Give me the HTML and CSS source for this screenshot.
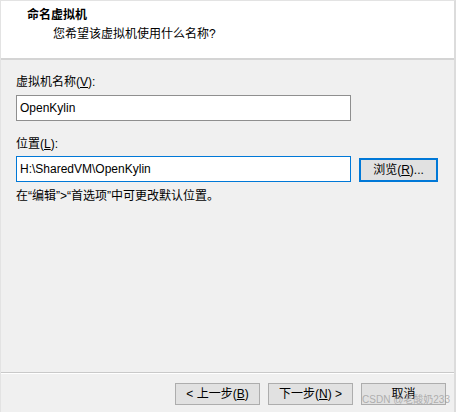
FILE: index.html
```html
<!DOCTYPE html>
<html lang="zh-CN">
<head>
<meta charset="utf-8">
<title>命名虚拟机</title>
<link rel="stylesheet" href="styles.css">
</head>
<body>
<div class="wizard">
  <header class="wizard-head">
    <h1 class="wizard-title">命名虚拟机</h1>
    <p class="wizard-sub">您希望该虚拟机使用什么名称?</p>
  </header>

  <main class="wizard-body">
    <label class="field-label">虚拟机名称(<u>V</u>):</label>
    <div class="textbox">OpenKylin</div>

    <label class="field-label second">位置(<u>L</u>):</label>
    <div class="path-row">
      <div class="textbox focused">H:\SharedVM\OpenKylin</div>
      <button class="btn btn-default">浏览(<u>R</u>)...</button>
    </div>
    <p class="hint">在“编辑”&gt;“首选项”中可更改默认位置。</p>
  </main>

  <footer class="wizard-foot">
    <button class="btn nav">&lt; 上一步(<u>B</u>)</button>
    <button class="btn nav">下一步(<u>N</u>) &gt;</button>
    <button class="btn nav">取消</button>
    <span class="watermark">CSDN @老酸奶233</span>
  </footer>
</div>
</body>
</html>
```
FILE: styles.css
```css
* { box-sizing: border-box; }

html, body {
  margin: 0;
  padding: 0;
  background: #f0f0f0;
}

body {
  width: 456px;
  height: 412px;
  font-family: "Liberation Sans", "Noto Sans CJK SC", sans-serif;
  font-size: 12px;
  line-height: 16px;
  color: #000;
}

.wizard {
  width: 456px;
  height: 412px;
  display: flex;
  flex-direction: column;
  border-top: 1px solid #e3e3e3;
  border-left: 1px solid #e3e3e3;
  border-right: 2px solid #dcdcdc;
  background: #f0f0f0;
}

/* white banner with the step title */
.wizard-head {
  background: #fff;
  height: 59px;
  padding: 6px 0 0 26px;
  border-bottom: 2px solid #d4d4d4;
}

.wizard-title {
  margin: 0;
  font-size: 12px;
  line-height: 16px;
  font-weight: bold;
}

.wizard-sub {
  margin: 3px 0 0 26px;
}

.wizard-body {
  flex: 1;
  padding: 14px 0 0 15px;
  display: flex;
  flex-direction: column;
  align-items: flex-start;
}

.field-label {
  display: block;
  margin-bottom: 5px;
}

.field-label.second {
  margin-top: 15px;
  margin-bottom: 4px;
}

.textbox {
  width: 335px;
  height: 26px;
  background: #fff;
  border: 1px solid #8f8f8f;
  padding: 4px 0 0 3px;
  line-height: 16px;
  white-space: nowrap;
}

.textbox.focused {
  border-color: #0078d7;
}

.path-row {
  display: flex;
  align-items: flex-end;
  gap: 8px;
}

.btn {
  font: inherit;
  color: #000;
  background: #e1e1e1;
  border: 1px solid #adadad;
  padding: 0;
  margin: 0;
  line-height: 16px;
}

.btn-default {
  width: 79px;
  height: 24px;
  border: 2px solid #0078d7;
}

.hint {
  margin: 6px 0 0;
}

/* separator plus the navigation buttons */
.wizard-foot {
  position: relative;
  height: 40px;
  border-top: 1px solid #c9c9c9;
  box-shadow: inset 0 1px 0 #fff;
  display: flex;
  justify-content: flex-end;
  align-items: flex-start;
  gap: 8px;
  padding: 10px 8px 0 0;
}

.nav {
  width: 85px;
  height: 22px;
}

.watermark {
  position: absolute;
  right: 4px;
  bottom: 6px;
  font-size: 10px;
  line-height: 12px;
  color: rgba(150, 150, 150, 0.7);
  pointer-events: none;
}
```
